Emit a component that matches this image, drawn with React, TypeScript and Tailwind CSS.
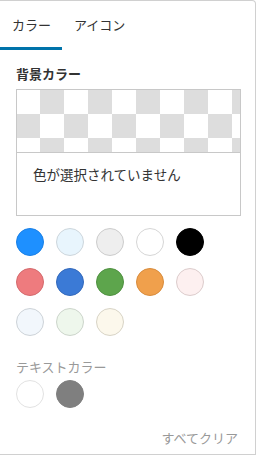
import { useState } from "react";

// Colour picker panel — tabs, background preview, swatch grid, text colours.

const bgSwatches = [
  { color: "#1e90ff", border: "#1a80e6" },
  { color: "#e8f5fd", border: "#cdd6dc" },
  { color: "#eeeeee", border: "#cccccc" },
  { color: "#ffffff", border: "#d6d6d6" },
  { color: "#000000", border: "#000000" },
  { color: "#ee7b7e", border: "#d46a6d" },
  { color: "#3b7ad6", border: "#3369bb" },
  { color: "#5da54c", border: "#4f9141" },
  { color: "#f0a04c", border: "#d88c3d" },
  { color: "#fdf0f0", border: "#dccccc" },
  { color: "#f2f7fc", border: "#cdd3d8" },
  { color: "#eef7ec", border: "#ccd5cb" },
  { color: "#fcf8ec", border: "#d8d4c6" },
];

const textSwatches = [
  { color: "#ffffff", border: "#e2e2e2" },
  { color: "#7f7f7f", border: "#7f7f7f" },
];

function Swatch({ color, border }: { color: string; border: string }) {
  return (
    <button
      type="button"
      className="w-7 h-7 rounded-full border"
      style={{ backgroundColor: color, borderColor: border }}
    />
  );
}

export default function App() {
  const [tab, setTab] = useState("color");

  return (
    <div
      className="w-[257px] h-[456px] bg-white text-[13px] text-[#333]"
      style={{ fontFamily: '"Noto Sans CJK JP", "Noto Sans", sans-serif' }}
    >
      <div className="w-[256px] h-[455px] border-t border-r border-b border-[#d0d0d0] rounded-tr-[4px] flex flex-col">
        <div className="flex h-[49px]">
          <button
            type="button"
            onClick={() => setTab("color")}
            className={`h-full pl-3 pr-[11px] leading-none border-b-[3px] ${
              tab === "color" ? "border-[#0073aa]" : "border-transparent"
            }`}
          >
            カラー
          </button>
          <button
            type="button"
            onClick={() => setTab("icon")}
            className={`h-full px-3 leading-none border-b-[3px] ${
              tab === "icon" ? "border-[#0073aa]" : "border-transparent"
            }`}
          >
            アイコン
          </button>
        </div>

        <div className="px-4 pt-[17px] flex flex-col">
          <div className="font-bold leading-none h-[13px]">背景カラー</div>

          <div className="mt-[9px] w-[225px] border border-[#c8c8c8]">
            <div className="h-[63px] border-b border-[#c8c8c8] bg-[conic-gradient(#dddddd_25%,#ffffff_0_50%,#dddddd_0_75%,#ffffff_0)] bg-size-[48px_48px] bg-[position:-1px_0]" />
            <div className="h-[62px] pl-4 pt-[12px] leading-[18px] text-[13.5px]">色が選択されていません</div>
          </div>

          <div className="mt-[12px] grid grid-cols-[repeat(5,28px)] gap-3">
            {bgSwatches.map((s) => (
              <Swatch key={s.color} color={s.color} border={s.border} />
            ))}
          </div>

          <div className="mt-[24px] leading-none text-[#999] h-[13px]">テキストカラー</div>
          <div className="mt-[7px] flex gap-3">
            {textSwatches.map((s) => (
              <Swatch key={s.color} color={s.color} border={s.border} />
            ))}
          </div>

          <div className="mt-[23px] pr-[1px] flex justify-end">
            <button type="button" className="text-[#999] leading-none">
              すべてクリア
            </button>
          </div>
        </div>
      </div>
    </div>
  );
}
